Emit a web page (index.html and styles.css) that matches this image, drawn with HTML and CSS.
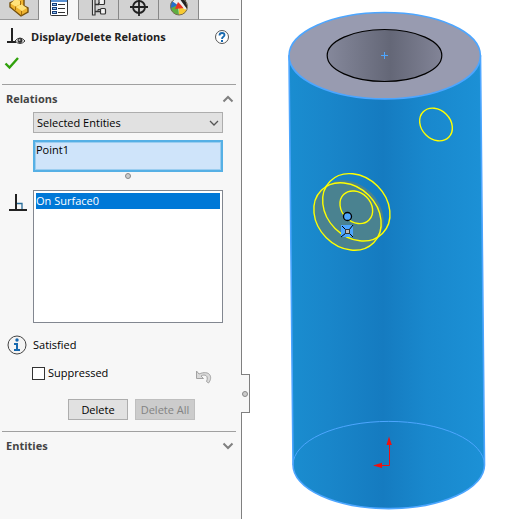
FILE: index.html
```
<!DOCTYPE html>
<html lang="en">
<head>
<meta charset="utf-8">
<title>Display/Delete Relations</title>
<link rel="stylesheet" href="styles.css">
</head>
<body>
<div class="app">
  <aside class="panel">
    <nav class="tabs" aria-label="Manager tabs">
      <button class="tab" aria-label="Feature tree">
        <svg width="20" height="18" viewBox="0 0 20 18"><path d="M1 3l5-2.500V-2h9v8l4 2v4l-7 4L1 7z" fill="#eeb32f" stroke="#75500c" stroke-width="1.400"/><path d="M1.500 3.500l5 3 5-2.500V1L6.500-1zM12 4l6 4-5 3-6-4z" fill="#ffe27a"/><path d="M6.500 6.500V10M12.500 11v4.500M11.500 1v4" stroke="#a66f0d" fill="none"/></svg>
      </button>
      <button class="tab tab-active" aria-label="Property manager">
        <svg width="20" height="18" viewBox="0 0 20 18"><rect x="1.500" y="-4.500" width="17" height="20" rx="1" fill="#fff" stroke="#333"/><path d="M2 0h16v2H2z" fill="#5a91d2"/><g fill="#8fc1ef" stroke="#173d78"><rect x="3.500" y="3.500" width="4" height="2"/><rect x="3.500" y="7.500" width="4" height="2"/><rect x="3.500" y="11.500" width="4" height="2"/></g><path d="M9 4.500h7M9 8.500h7M9 12.500h7" stroke="#333"/></svg>
      </button>
      <button class="tab" aria-label="Configurations">
        <svg width="16" height="18" viewBox="0 0 16 18"><path d="M3 4.500h5M3 11.500h6" stroke="#333" stroke-width="1.400"/><g fill="#f3f3f3" stroke="#333" stroke-width="1.200"><path d="M1.500-3h2.500v18H1.500z"/><rect x="8" y="-1" width="5.500" height="5.500" rx="1"/><rect x="9.500" y="8.500" width="5" height="5.500" rx="1"/></g><path d="M6.500 4.500l2-2M7 12V9.500h2" fill="none" stroke="#333"/></svg>
      </button>
      <button class="tab" aria-label="Dimensions">
        <svg width="20" height="18" viewBox="0 0 20 18"><circle cx="10" cy="7" r="6" fill="none" stroke="#222" stroke-width="1.800"/><path d="M1 7h18M10-2v18" stroke="#222" stroke-width="1.800"/></svg>
      </button>
      <button class="tab" aria-label="Appearances">
        <svg width="20" height="18" viewBox="0 0 20 18"><circle cx="10" cy="6.500" r="8.500" fill="#eee"/><path d="M10 6L3 1a8 8 0 0 0 1 11z" fill="#276fcb"/><path d="M9 5L2 8a8 8 0 0 0 8 7z" fill="#60ad40"/><path d="M10 7v8a9 9 0 0 0 8-5l-4-2z" fill="#f7ca31"/><path d="M9 2l6 6-9 1z" fill="#e83423"/><path d="M10-2h6l2 7v4z" fill="#222"/><path d="M10 0l6 9" fill="none" stroke="#eee" stroke-width="1.500"/><circle cx="10" cy="6.500" r="8.500" fill="none" stroke="#776b52"/></svg>
      </button>
    </nav>

    <header class="title-row">
      <svg width="20" height="20" viewBox="0 0 20 20"><path d="M5 1v14M0 15h9" stroke="#222" stroke-width="2" fill="none"/><path d="M8 14q5-6 10 0q-5 5-10 0z" fill="#fff" stroke="#333"/><circle cx="13" cy="13.500" r="2.500" fill="#333"/><circle cx="12.500" cy="13" r="1" fill="#bbb"/></svg>
      <h1>Display/Delete Relations</h1>
      <button class="bare" aria-label="Help">
        <svg width="16" height="16" viewBox="0 0 16 16"><circle cx="8" cy="8" r="6.500" fill="#fff" stroke="#555"/><path d="M5.500 6.500c0-3.500 5-3 5-.5 0 2-2.500 1.500-2.500 4" fill="none" stroke="#1768ae" stroke-width="1.800"/><rect x="7" y="11" width="2" height="2" fill="#1768ae"/></svg>
      </button>
    </header>
    <div class="confirm-row">
      <button class="bare" aria-label="OK"><svg width="16" height="14" viewBox="0 0 16 14"><path d="M1.500 7.500l4 4L14 2" fill="none" stroke="#31a10c" stroke-width="2.400"/></svg></button>
    </div>

    <section class="group">
      <div class="group-head">
        <h2>Relations</h2>
        <button class="bare" aria-label="Collapse relations"><svg width="12" height="8" viewBox="0 0 12 8"><path d="M1.500 6.500L6 2l4.500 4.500" fill="none" stroke="#808080" stroke-width="2"/></svg></button>
      </div>
      <div class="fields">
        <div class="select-wrap">
          <select aria-label="Relation filter"><option>Selected Entities</option><option>All in this sketch</option></select>
          <svg width="10" height="6" viewBox="0 0 10 6"><path d="M1 1l4 4 4-4" fill="none" stroke="#555" stroke-width="1.300"/></svg>
        </div>
        <ul class="selection" role="listbox" aria-label="Selected items"><li role="option">Point1</li></ul>
        <span class="grip"></span>
        <div class="relation-row">
          <svg width="18" height="18" viewBox="0 0 18 18"><path d="M7 0v16M0 16h18" stroke="#222" stroke-width="2" fill="none"/><path d="M8 9.500h5V15" stroke="#286b99" fill="none" stroke-width="1.300"/></svg>
          <ul class="relations" role="listbox" aria-label="Relations"><li role="option" aria-selected="true">On Surface0</li></ul>
        </div>
      </div>
      <div class="status">
        <svg width="20" height="20" viewBox="0 0 20 20"><circle cx="10" cy="10" r="9" fill="#f4f4f4" stroke="#444"/><path d="M7 8h4v6h2v2H7v-2h2v-4H7z" fill="#1768ae"/><circle cx="10" cy="5" r="1.700" fill="#1768ae"/></svg>
        <span>Satisfied</span>
      </div>
      <div class="option-row">
        <label><input type="checkbox"><span>Suppressed</span></label>
        <button class="bare undo" aria-label="Undo"><svg width="18" height="16" viewBox="0 0 18 16"><path d="M1.500 2v7.500h7L6 7c4-2.500 8 0 5.500 5.500l2 1.500c5-6 1-13.500-9.500-9z" fill="#dadada" stroke="#a2a2a2"/></svg></button>
      </div>
      <div class="actions"><button>Delete</button><button disabled>Delete All</button></div>
    </section>

    <section class="group">
      <div class="group-head">
        <h2>Entities</h2>
        <button class="bare" aria-label="Expand entities"><svg width="12" height="8" viewBox="0 0 12 8"><path d="M1.500 1.500L6 6l4.500-4.500" fill="none" stroke="#808080" stroke-width="2"/></svg></button>
      </div>
    </section>
    <button class="splitter" aria-label="Collapse panel"><span class="grip"></span></button>
  </aside>

  <main class="viewport">
    <svg viewBox="242 0 264 519" preserveAspectRatio="xMinYMin meet" role="img" aria-label="Hollow cylinder with sketch circles">
      <defs>
        <linearGradient id="side"><stop offset="0" stop-color="#1a8dd0"/><stop offset=".2" stop-color="#1986ca"/><stop offset=".48" stop-color="#157bc0"/><stop offset=".7" stop-color="#1988cd"/><stop offset="1" stop-color="#1c91d6"/></linearGradient>
        <linearGradient id="bore"><stop offset="0" stop-color="#85889b"/><stop offset=".55" stop-color="#646777"/><stop offset="1" stop-color="#828497"/></linearGradient>
      </defs>
      <path d="M289 56L293 465A95.500 43.500 0 0 0 484.500 465L480.500 56z" fill="url(#side)" stroke="#4da6ff" stroke-width="1.600"/>
      <path d="M293 465A95.500 43.500 0 0 1 484.500 465" fill="none" stroke="#4da6ff"/>
      <ellipse cx="384.700" cy="55.700" rx="95.700" ry="43.200" fill="#989bb0" stroke="#4da6ff" stroke-width="1.600"/>
      <ellipse cx="384.500" cy="55.500" rx="57.300" ry="26" fill="url(#bore)" stroke="#000" stroke-width="1.200"/>
      <path d="M381 55.500h7M384.500 52v7" stroke="#4da6ff"/>
      <g fill="none" stroke="#ff0" stroke-width="1.400">
        <ellipse cx="436" cy="124.500" rx="18" ry="14.500" transform="rotate(45 436 124.500)"/>
        <g fill="#4a8290" stroke="none">
          <ellipse cx="350" cy="214" rx="37" ry="30" transform="rotate(45 350 214)"/>
          <ellipse cx="347.500" cy="216.500" rx="37" ry="30" transform="rotate(45 347.500 216.500)"/>
        </g>
        <ellipse cx="347.500" cy="216.500" rx="37" ry="30" transform="rotate(45 347.500 216.500)"/>
        <ellipse cx="356.300" cy="207.300" rx="37" ry="30" transform="rotate(45 356.300 207.300)"/>
        <ellipse cx="356.300" cy="207.300" rx="18" ry="14.500" transform="rotate(45 356.300 207.300)"/>
      </g>
      <circle cx="347.500" cy="216.500" r="4" fill="#4da6ff" stroke="#000" stroke-width="1.300"/>
      <rect x="341" y="225" width="12" height="12" fill="#4da6ff"/>
      <path d="M353 225l-4 5M342 226l4 4M346 233l-5 4M349 233l4 4" stroke="#000" fill="none"/>
      <rect x="345.500" y="229.500" width="4" height="4" fill="#bbb" stroke="#333"/>
      <path d="M389.500 440v25.500H376" stroke="#e11" fill="none"/>
      <path d="M389 436.500l2.800 8.500h-5.300zM373 465.500l9-2.800v5.300z" fill="#e11"/>
    </svg>
  </main>
</div>
</body>
</html>
```
FILE: styles.css
```
* { box-sizing: border-box; }
body { margin: 0; background: #fff; color: #000; font: 11px/16px "Open Sans", "Noto Sans", sans-serif; }
h1, h2, ul { margin: 0; padding: 0; list-style: none; }
button, select { font: inherit; color: inherit; }
svg { display: block; flex: none; }
.app { display: flex; min-height: 100vh; }
.panel { position: relative; flex: none; width: 242px; background: #f7f7f7; border-right: 1px solid #808080; }
.bare { padding: 0; border: 0; background: none; }

.tabs { display: flex; height: 20px; margin-right: 2px; overflow: hidden; box-shadow: inset 0 -1px #999; }
.tab { display: flex; flex: 0 0 40px; justify-content: center; padding: 0; border: 0; border-right: 1px solid #888; border-bottom: 1px solid #999; background: #d2d2d2; }
.tab:first-child { flex-basis: 39px; }
.tab-active { background: #f7f7f7; border-bottom-color: #f7f7f7; }

.title-row { display: flex; align-items: center; gap: 4px; height: 34px; padding: 0 11px 0 7px; }
h1, h2 { font: bold 11px/16px "Open Sans", "Noto Sans", sans-serif; white-space: nowrap; }
h1 { flex: 1; color: #222; }
h2 { color: #444; }
.confirm-row { height: 30px; padding: 2px 4px; }

.group { margin: 0 5px 0 2px; border-top: 1px solid #a0a0a0; }
.group-head { display: flex; align-items: center; justify-content: space-between; height: 27px; padding: 0 2px 0 4px; }
.fields { margin: 0 13px 0 31px; }
.select-wrap { position: relative; }
.select-wrap svg { position: absolute; right: 4px; top: 8px; pointer-events: none; }
select { display: block; width: 100%; height: 21px; padding: 0 3px; border: 1px solid #adadad; border-radius: 0; background: #e1e1e1; appearance: none; }
.selection { height: 32px; margin-top: 7px; padding: 0 1px; border: 2px solid #56b0e5; background: #cfe4fa; box-shadow: inset 0 0 0 1px #9bcdf0; }
.grip { display: block; width: 6px; height: 6px; margin: 1px auto 0; border: 1px solid #888; border-radius: 50%; background: #ccc; }
.relation-row { display: flex; align-items: flex-start; gap: 6px; margin: 11px 0 0 -24px; }
.relation-row svg { margin-top: 4px; }
.relations { flex: 1; height: 133px; padding: 2px; border: 1px solid #828790; background: #fff; }
.relations li { background: #0078d7; color: #fff; }
.status { display: flex; align-items: center; gap: 6px; margin: 12px 0 0 5px; }
.option-row { display: flex; align-items: center; justify-content: space-between; height: 20px; margin: 8px 23px 0 30px; }
label { display: flex; align-items: center; gap: 3px; }
input { width: 13px; height: 13px; margin: 0; border: 1px solid #333; background: #fff; appearance: none; }
.undo { margin-top: 8px; }
.actions { display: flex; gap: 7px; margin: 16px 0 11px 66px; }
.actions button { width: 60px; height: 21px; padding: 0; border: 1px solid #adadad; background: #e1e1e1; white-space: nowrap; }
.actions button:disabled { border-color: #bfbfbf; background: #ccc; color: #838383; }

.splitter { position: absolute; z-index: 1; top: 374px; right: -9px; width: 9px; height: 39px; padding: 0; border: 1px solid #808080; border-left: 0; background: #f7f7f7; }
.splitter .grip { margin: 0 auto; }
.viewport { flex: 1; min-width: 0; }
.viewport svg { width: 100%; height: auto; }
```
